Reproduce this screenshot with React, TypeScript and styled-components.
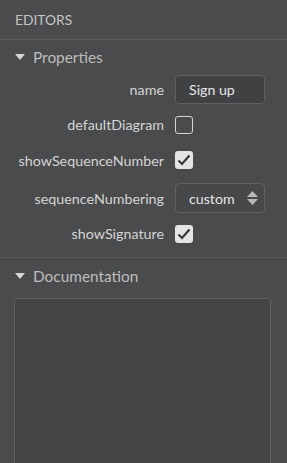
import React from "react";
import styled, { createGlobalStyle } from "styled-components";

const Global = createGlobalStyle`
  html, body { margin: 0; padding: 0; background: #4a4b4c; }
  body { font-family: Lato, "Open Sans", sans-serif; }
`;

const Panel = styled.div`
  width: 287px;
  height: 463px;
  background: #4a4b4c;
  color: #c9c9c9;
  display: flex;
  flex-direction: column;
  overflow: hidden;
`;

const Title = styled.div`
  height: 40px;
  box-sizing: border-box;
  display: flex;
  align-items: center;
  padding: 0 15px 1px;
  font-size: 13.8px;
  color: #c4c4c4;
  border-bottom: 1px solid #5b5c5d;
`;

const SectionHeader = styled.div<{ $h: number }>`
  display: flex;
  align-items: center;
  gap: 8px;
  padding: 0 0 0 15px;
  height: ${(p) => p.$h}px;
  font-size: 15.4px;
  color: #bdbdbd;
`;

const Caret = styled.span`
  width: 0;
  height: 0;
  border-left: 5px solid transparent;
  border-right: 5px solid transparent;
  border-top: 6px solid #d6d6d6;
`;

const Props = styled.div`
  display: grid;
  grid-template-columns: 164px 90px;
  column-gap: 11px;
  padding-bottom: 10px;
  border-bottom: 1px solid #5b5c5d;
`;

const Label = styled.div<{ $h: number }>`
  height: ${(p) => p.$h}px;
  display: flex;
  align-items: center;
  justify-content: flex-end;
  font-size: 14.3px;
  color: #d4d4d4;
  white-space: nowrap;
`;

const Cell = styled.div<{ $h: number }>`
  height: ${(p) => p.$h}px;
  display: flex;
  align-items: center;
`;

const TextBox = styled.div`
  width: 90px;
  height: 29px;
  box-sizing: border-box;
  border: 1px solid #5f6062;
  border-radius: 4px;
  background: #404143;
  display: flex;
  align-items: center;
  padding-left: 13px;
  font-size: 14.2px;
  color: #e6e6e6;
`;

const SelectBox = styled(TextBox)`
  height: 30px;
  background: #47484a;
  justify-content: space-between;
  padding-right: 6px;
`;

const Check = styled.div<{ $on?: boolean }>`
  width: 18px;
  height: 18px;
  box-sizing: border-box;
  border-radius: 3px;
  border: ${(p) => (p.$on ? "none" : "1.5px solid #d4d4d4")};
  background: ${(p) => (p.$on ? "#e4e4e4" : "transparent")};
  display: flex;
  align-items: center;
  justify-content: center;
`;

const DocArea = styled.div`
  margin: 4px 16px 0 14px;
  flex: 1;
  border: 1px solid #5f6062;
  border-bottom: none;
  border-radius: 4px 4px 0 0;
  background: #434446;
`;

const Tick = () => (
  <svg width="14" height="12" viewBox="0 0 14 12">
    <path d="M1.5 6.5 L5 10 L12.5 1.5" fill="none" stroke="#383838" strokeWidth="2.2" />
  </svg>
);

const Spinner = () => (
  <svg width="11" height="16" viewBox="0 0 11 16">
    <path d="M5.5 1 L11 7 L0 7 Z" fill="#b9b9b9" />
    <path d="M5.5 15 L11 9 L0 9 Z" fill="#b9b9b9" />
  </svg>
);

export default function App() {
  return (
    <Panel>
      <Global />
      <Title>EDITORS</Title>
      <SectionHeader $h={33}>
        <Caret />
        Properties
      </SectionHeader>
      <Props>
        <Label $h={32}>name</Label>
        <Cell $h={32}>
          <TextBox>Sign up</TextBox>
        </Cell>
        <Label $h={39}>defaultDiagram</Label>
        <Cell $h={39}>
          <Check />
        </Cell>
        <Label $h={32}>showSequenceNumber</Label>
        <Cell $h={32}>
          <Check $on>
            <Tick />
          </Check>
        </Cell>
        <Label $h={44}>sequenceNumbering</Label>
        <Cell $h={44}>
          <SelectBox>
            custom
            <Spinner />
          </SelectBox>
        </Cell>
        <Label $h={27}>showSignature</Label>
        <Cell $h={27}>
          <Check $on>
            <Tick />
          </Check>
        </Cell>
      </Props>
      <SectionHeader $h={36}>
        <Caret />
        Documentation
      </SectionHeader>
      <DocArea />
    </Panel>
  );
}
